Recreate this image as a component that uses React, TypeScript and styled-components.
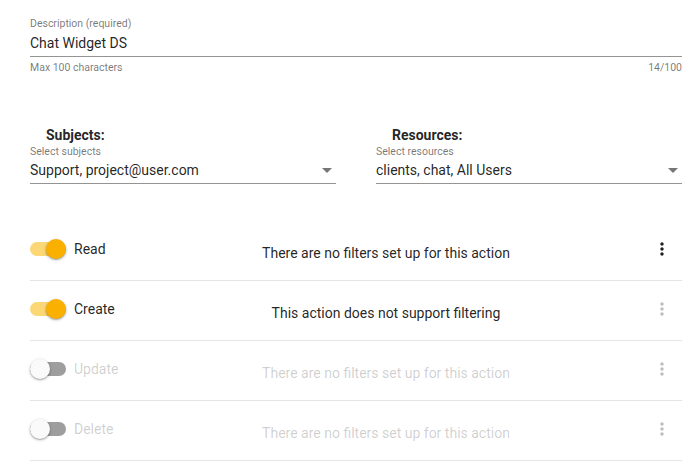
import React from 'react';
import styled, { createGlobalStyle } from 'styled-components';

const GlobalStyle = createGlobalStyle`
	body {
		margin: 0;
		background: #ffffff;
		font-family: Roboto, "Noto Sans", sans-serif;
		color: rgba(0, 0, 0, 0.87);
	}
`;

type Action = {
	name: string;
	enabled: boolean;
	message: string;
	menuActive?: boolean;
};

const actions: Action[] = [
	{ name: 'Read', enabled: true, message: 'There are no filters set up for this action', menuActive: true },
	{ name: 'Create', enabled: true, message: 'This action does not support filtering' },
	{ name: 'Update', enabled: false, message: 'There are no filters set up for this action' },
	{ name: 'Delete', enabled: false, message: 'There are no filters set up for this action' },
];

const MoreVert = ({ color }: { color: string }) => (
	<svg width="20" height="20" viewBox="0 0 24 24" fill={color}>
		<path d="M12 8c1.1 0 2-.9 2-2s-.9-2-2-2-2 .9-2 2 .9 2 2 2zm0 2c-1.1 0-2 .9-2 2s.9 2 2 2 2-.9 2-2-.9-2-2-2zm0 6c-1.1 0-2 .9-2 2s.9 2 2 2 2-.9 2-2-.9-2-2-2z" />
	</svg>
);

const ArrowDropDown = () => (
	<svg width="24" height="24" viewBox="0 0 24 24" fill="rgba(0,0,0,0.54)">
		<path d="M7 10l5 5 5-5z" />
	</svg>
);

function SelectField({ heading, label, value }: { heading: string; label: string; value: string }) {
	return (
		<SelectColumn>
			<SelectHeading>{heading}</SelectHeading>
			<SmallLabel>{label}</SmallLabel>
			<SelectInput>
				<SelectValue>{value}</SelectValue>
				<ArrowWrap><ArrowDropDown /></ArrowWrap>
			</SelectInput>
		</SelectColumn>
	);
}

export default function App() {
	return (
		<>
			<GlobalStyle />
			<Page>
				<TextField>
					<SmallLabel>Description (required)</SmallLabel>
					<TextInput>Chat Widget DS</TextInput>
					<HelperRow>
						<span>Max 100 characters</span>
						<span>14/100</span>
					</HelperRow>
				</TextField>
				<SelectsRow>
					<SelectField heading="Subjects:" label="Select subjects" value="Support, project@user.com" />
					<SelectField heading="Resources:" label="Select resources" value="clients, chat, All Users" />
				</SelectsRow>
				<ActionList>
					{actions.map(action => (
						<ActionRow key={action.name}>
							<ToggleCell>
								<Switch>
									<SwitchTrack $on={action.enabled} />
									<SwitchThumb $on={action.enabled} />
								</Switch>
								<ActionName $enabled={action.enabled}>{action.name}</ActionName>
							</ToggleCell>
							<ActionMessage $enabled={action.enabled}>{action.message}</ActionMessage>
							<MenuButton>
								<MoreVert color={action.menuActive ? 'rgba(0,0,0,0.87)' : 'rgba(0,0,0,0.26)'} />
							</MenuButton>
						</ActionRow>
					))}
				</ActionList>
			</Page>
		</>
	);
}

const Page = styled.div`
	width: 652px;
	padding: 0 18px 0 30px;
	display: flex;
	flex-direction: column;
`;

const TextField = styled.div`
	display: flex;
	flex-direction: column;
	padding-top: 17px;
`;

const SmallLabel = styled.div`
	font-size: 10.5px;
	line-height: 14px;
	color: rgba(0, 0, 0, 0.54);
`;

const TextInput = styled.div`
	font-size: 14px;
	line-height: 24px;
	height: 25px;
	border-bottom: 1px solid rgba(0, 0, 0, 0.42);
`;

const HelperRow = styled.div`
	display: flex;
	justify-content: space-between;
	margin-top: 4px;
	font-size: 10.5px;
	line-height: 14px;
	color: rgba(0, 0, 0, 0.54);
`;

const SelectsRow = styled.div`
	display: grid;
	grid-template-columns: 1fr 1fr;
	gap: 40px;
	margin-top: 50px;
`;

const SelectColumn = styled.div`
	display: flex;
	flex-direction: column;
`;

const SelectHeading = styled.div`
	font-size: 14px;
	font-weight: 700;
	line-height: 20px;
	padding-left: 16px;
	color: rgba(0, 0, 0, 0.87);
`;

const SelectInput = styled.div`
	display: flex;
	align-items: center;
	height: 24px;
	padding-bottom: 1px;
	box-sizing: content-box;
	border-bottom: 1px solid rgba(0, 0, 0, 0.42);
	margin-top: -1px;
`;

const SelectValue = styled.div`
	flex: 1;
	font-size: 14px;
	line-height: 20px;
`;

const ArrowWrap = styled.div`
	display: flex;
	margin-right: -3px;
`;

const ActionList = styled.div`
	display: flex;
	flex-direction: column;
	margin-top: 37px;
`;

const ActionRow = styled.div`
	display: grid;
	grid-template-columns: 92px 1fr 24px;
	padding-right: 8px;
	padding-bottom: 4px;
	box-sizing: border-box;
	align-items: center;
	height: 60px;
	border-bottom: 1px solid rgba(0, 0, 0, 0.1);
`;

const ToggleCell = styled.div`
	display: flex;
	align-items: center;
	gap: 8px;
`;

const Switch = styled.div`
	position: relative;
	width: 36px;
	height: 20px;
	flex-shrink: 0;
`;

const SwitchTrack = styled.div<{ $on: boolean }>`
	position: absolute;
	left: 0;
	top: 3px;
	width: 36px;
	height: 14px;
	border-radius: 7px;
	background: ${p => (p.$on ? '#fbd775' : '#9e9e9e')};
`;

const SwitchThumb = styled.div<{ $on: boolean }>`
	position: absolute;
	top: 0;
	left: ${p => (p.$on ? '16px' : '0')};
	width: 20px;
	height: 20px;
	border-radius: 50%;
	background: ${p => (p.$on ? '#f9b000' : '#fafafa')};
	box-shadow: 0 1px 3px rgba(0, 0, 0, 0.3), 0 1px 1px rgba(0, 0, 0, 0.14);
`;

const ActionName = styled.div<{ $enabled: boolean }>`
	font-size: 14px;
	line-height: 20px;
	color: ${p => (p.$enabled ? 'rgba(0,0,0,0.87)' : 'rgba(0,0,0,0.2)')};
`;

const ActionMessage = styled.div<{ $enabled: boolean }>`
	text-align: center;
	font-size: 14px;
	line-height: 20px;
	padding-top: 8px;
	color: ${p => (p.$enabled ? 'rgba(0,0,0,0.87)' : 'rgba(0,0,0,0.2)')};
`;

const MenuButton = styled.div`
	display: flex;
	justify-content: center;
	align-items: center;
`;
